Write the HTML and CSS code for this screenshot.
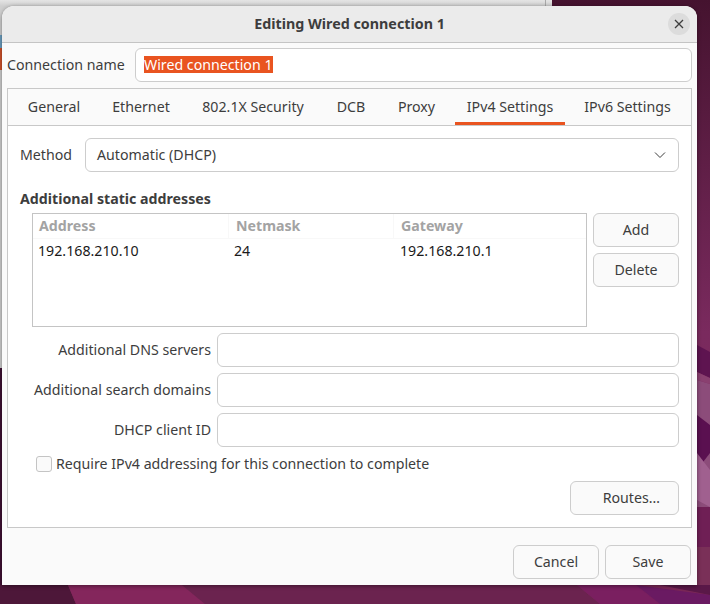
FILE: index.html
```html
<!DOCTYPE html>
<html lang="en">
<head>
<meta charset="utf-8">
<title>Editing Wired connection 1</title>
<link rel="stylesheet" href="styles.css">
</head>
<body>
<div class="desktop">
  <svg class="wallpaper" width="710" height="604" viewBox="0 0 710 604" aria-hidden="true">
    <defs>
      <linearGradient id="bg" x1="0" y1="0" x2="0" y2="1">
        <stop offset="0" stop-color="#45132f"/>
        <stop offset="0.55" stop-color="#7a2a5e"/>
        <stop offset="1" stop-color="#7a2656"/>
      </linearGradient>
    </defs>
    <rect width="710" height="604" fill="url(#bg)"/>
    <polygon points="0,368 2,368 2,604 0,604" fill="#3f1033"/>
    <polygon points="0,585 68,585 76,604 0,604" fill="#4d1739"/>
    <polygon points="68,585 182,585 205,604 76,604" fill="#84265c"/>
    <polygon points="182,585 577,585 600,604 205,604" fill="#6b234f"/>
    <polygon points="577,585 636,585 660,604 600,604" fill="#7a1f60"/>
    <polygon points="636,585 710,595 710,604 660,604" fill="#6a1a62"/>
    <polygon points="660,585 710,585 710,595" fill="#5a1848"/>
    <polygon points="697,345 710,352 710,378 697,372" fill="#5e1450"/>
    <polygon points="697,372 710,378 710,384 697,380" fill="#8a4070"/>
    <polygon points="697,380 710,384 710,507 697,507" fill="#8c4c7a"/>
    <polygon points="697,415 710,425 710,453 697,470" fill="#5a1050"/>
    <polygon points="697,453 710,470 710,507 697,500" fill="#a0608f"/>
    <polygon points="697,507 710,507 710,547 697,547" fill="#6f1f55"/>
    <polygon points="697,547 710,547 710,585 697,585" fill="#7a3058"/>
  </svg>
  <div class="back-window">
    <div class="back-blue"></div>
    <div class="back-orange"></div>
  </div>

  <div class="dialog">
    <header class="titlebar">
      <h1 class="title">Editing Wired connection 1</h1>
      <button class="close" type="button" aria-label="Close">
        <svg width="10" height="10" viewBox="0 0 10 10"><path d="M1 1L9 9M9 1L1 9" stroke="#3d3d3d" stroke-width="1.3" fill="none"/></svg>
      </button>
    </header>

    <div class="name-row">
      <span class="label">Connection name</span>
      <div class="entry entry-name"><span class="selected">Wired connection 1</span></div>
    </div>

    <div class="notebook">
      <div class="tabs">
        <div class="tab">General</div>
        <div class="tab">Ethernet</div>
        <div class="tab">802.1X Security</div>
        <div class="tab">DCB</div>
        <div class="tab">Proxy</div>
        <div class="tab tab-active">IPv4 Settings</div>
        <div class="tab">IPv6 Settings</div>
      </div>

      <div class="panel">
        <div class="method-row">
          <span class="label">Method</span>
          <div class="entry combo">
            <span>Automatic (DHCP)</span>
            <svg class="chevron" width="12" height="8" viewBox="0 0 12 8"><path d="M1 1.5L6 6.5L11 1.5" stroke="#3d3d3d" stroke-width="1" fill="none"/></svg>
          </div>
        </div>

        <div class="section-title">Additional static addresses</div>

        <div class="address-row">
          <div class="tree">
            <div class="tree-head">
              <div class="th">Address</div>
              <div class="th th-next">Netmask</div>
              <div class="th th-next th-last">Gateway</div>
            </div>
            <div class="tree-row">
              <div class="td">192.168.210.10</div>
              <div class="td">24</div>
              <div class="td td-last">192.168.210.1</div>
            </div>
          </div>
          <div class="side-buttons">
            <button class="btn" type="button">Add</button>
            <button class="btn" type="button">Delete</button>
          </div>
        </div>

        <div class="form">
          <span class="form-label">Additional DNS servers</span><div class="entry"></div>
          <span class="form-label">Additional search domains</span><div class="entry"></div>
          <span class="form-label">DHCP client ID</span><div class="entry"></div>
        </div>

        <div class="check-row">
          <span class="checkbox"></span>
          <span class="label">Require IPv4 addressing for this connection to complete</span>
        </div>

        <div class="routes-row">
          <button class="btn btn-routes" type="button">Routes…</button>
        </div>
      </div>
    </div>

    <footer class="footer">
      <button class="btn" type="button">Cancel</button>
      <button class="btn" type="button">Save</button>
    </footer>
  </div>
</div>
</body>
</html>
```
FILE: styles.css
```css
* { box-sizing: border-box; }
html, body { margin: 0; padding: 0; }
body {
  font-family: "Noto Sans", "Open Sans", sans-serif;
  font-size: 14.2px;
  color: #3d3d3d;
}
.desktop {
  position: relative;
  width: 710px;
  height: 604px;
  overflow: hidden;
}
.wallpaper { position: absolute; left: 0; top: 0; display: block; }
.back-window {
  position: absolute;
  left: 0;
  top: 0;
  width: 552px;
  height: 368px;
  background: linear-gradient(#e4e4e4, #cfcfcf 6px);
}
.back-window::after {
  content: "";
  position: absolute;
  left: 545px;
  top: 0;
  width: 1px;
  height: 10px;
  background: #a8a8a8;
}
.back-blue {
  position: absolute;
  left: 0;
  top: 35px;
  width: 2px;
  height: 13px;
  background: #6b9ec0;
}
.back-orange {
  position: absolute;
  left: 0;
  top: 48px;
  width: 2px;
  height: 22px;
  background: #d0522a;
}
.dialog {
  position: absolute;
  left: 2px;
  top: 6px;
  width: 695px;
  height: 579px;
  display: flex;
  flex-direction: column;
  background: #fafafa;
  border-radius: 12px 12px 0 0;
  box-shadow: 0 1px 4px rgba(0, 0, 0, 0.45);
}
.titlebar {
  position: relative;
  flex: none;
  height: 37px;
  display: flex;
  align-items: center;
  justify-content: center;
  padding-bottom: 2px;
  background: #ebebeb;
  border-bottom: 1px solid #c4c4c4;
  border-radius: 12px 12px 0 0;
}
.title {
  margin: 0;
  font-size: 14.3px;
  font-weight: 700;
  color: #3d3d3d;
}
.close {
  position: absolute;
  right: 7px;
  top: 7px;
  width: 22px;
  height: 22px;
  padding: 0;
  display: flex;
  align-items: center;
  justify-content: center;
  border: 0;
  border-radius: 50%;
  background: #dcdcdc;
}
.name-row {
  flex: none;
  display: flex;
  align-items: center;
  justify-content: space-between;
  margin: 5px 5px 0 5px;
}
.label { white-space: nowrap; padding-bottom: 2px; }
.entry {
  height: 34px;
  background: #fff;
  border: 1px solid #cdcdcd;
  border-radius: 6px;
}
.entry-name {
  width: 557px;
  display: flex;
  align-items: center;
  padding: 0 0 2px 8px;
}
.selected {
  display: block;
  width: 129px;
  height: 17px;
  line-height: 17px;
  white-space: nowrap;
  background: #e95420;
  color: #fff;
}
.notebook {
  flex: none;
  display: flex;
  flex-direction: column;
  height: 440px;
  margin: 6px 5px 0 5px;
  background: #fff;
  border: 1px solid #c8c8c8;
}
.tabs {
  flex: none;
  display: grid;
  grid-template-columns: 76px 82px 126px 54px 61px 110px 109px;
  column-gap: 8px;
  height: 37px;
  padding-left: 8px;
  background: #fafafa;
  border-bottom: 1px solid #c8c8c8;
}
.tab {
  display: flex;
  align-items: center;
  justify-content: center;
  height: 36px;
  padding-bottom: 2px;
  white-space: nowrap;
}
.tab-active {
  padding-top: 1px;
  padding-bottom: 0;
  border-bottom: 3px solid #e95420;
}
.panel {
  flex: 1;
  padding: 12px 12px 0 12px;
  display: flex;
  flex-direction: column;
}
.method-row {
  display: flex;
  align-items: center;
  justify-content: space-between;
}
.combo {
  width: 594px;
  display: flex;
  align-items: center;
  justify-content: space-between;
  padding: 0 12px 2px 11px;
}
.chevron { margin-top: 2px; }
.section-title {
  margin-top: 18px;
  height: 18px;
  line-height: 18px;
  font-weight: 700;
  color: #3d3d3d;
}
.address-row {
  display: flex;
  justify-content: space-between;
  margin: 5px 0 0 12px;
}
.tree {
  width: 555px;
  height: 114px;
  background: #fff;
  border: 1px solid #c4c4c4;
}
.tree-head {
  display: grid;
  grid-template-columns: 196px 165px 1fr;
  height: 25px;
  border-bottom: 1px solid #f8f8f8;
}
.th {
  display: flex;
  align-items: center;
  padding: 0 0 2px 6px;
  font-weight: 700;
  color: #a3a3a3;
  border-right: 1px solid #f8f8f8;
}
.th-next { padding-left: 7px; }
.th-last { border-right: 0; }
.tree-row {
  display: grid;
  grid-template-columns: 196px 165px 1fr;
  height: 25px;
  padding-bottom: 3px;
  align-items: center;
  color: #1a1a1a;
}
.td { padding-left: 5px; }
.td-last { padding-left: 6px; }
.side-buttons {
  display: flex;
  flex-direction: column;
  gap: 6px;
}
.btn {
  width: 86px;
  height: 34px;
  padding: 0 0 2px 0;
  font: inherit;
  color: #3d3d3d;
  background: #fafafa;
  border: 1px solid #cdcdcd;
  border-radius: 6px;
}
.form {
  display: grid;
  grid-template-columns: 191px 462px;
  column-gap: 6px;
  row-gap: 6px;
  align-items: center;
  margin-top: 6px;
}
.form-label { text-align: right; white-space: nowrap; padding-bottom: 2px; }
.check-row {
  display: flex;
  align-items: center;
  gap: 4px;
  height: 16px;
  margin: 9px 0 0 16px;
}
.checkbox {
  flex: none;
  width: 16px;
  height: 16px;
  background: #fafafa;
  border: 1px solid #c4c4c4;
  border-radius: 3px;
}
.routes-row {
  display: flex;
  justify-content: flex-end;
  margin-top: 9px;
}
.btn-routes {
  width: 109px;
  padding-right: 18px;
  text-align: right;
}
.footer {
  flex: none;
  display: flex;
  justify-content: flex-end;
  gap: 6px;
  margin: 17px 6px 0 0;
}
```
